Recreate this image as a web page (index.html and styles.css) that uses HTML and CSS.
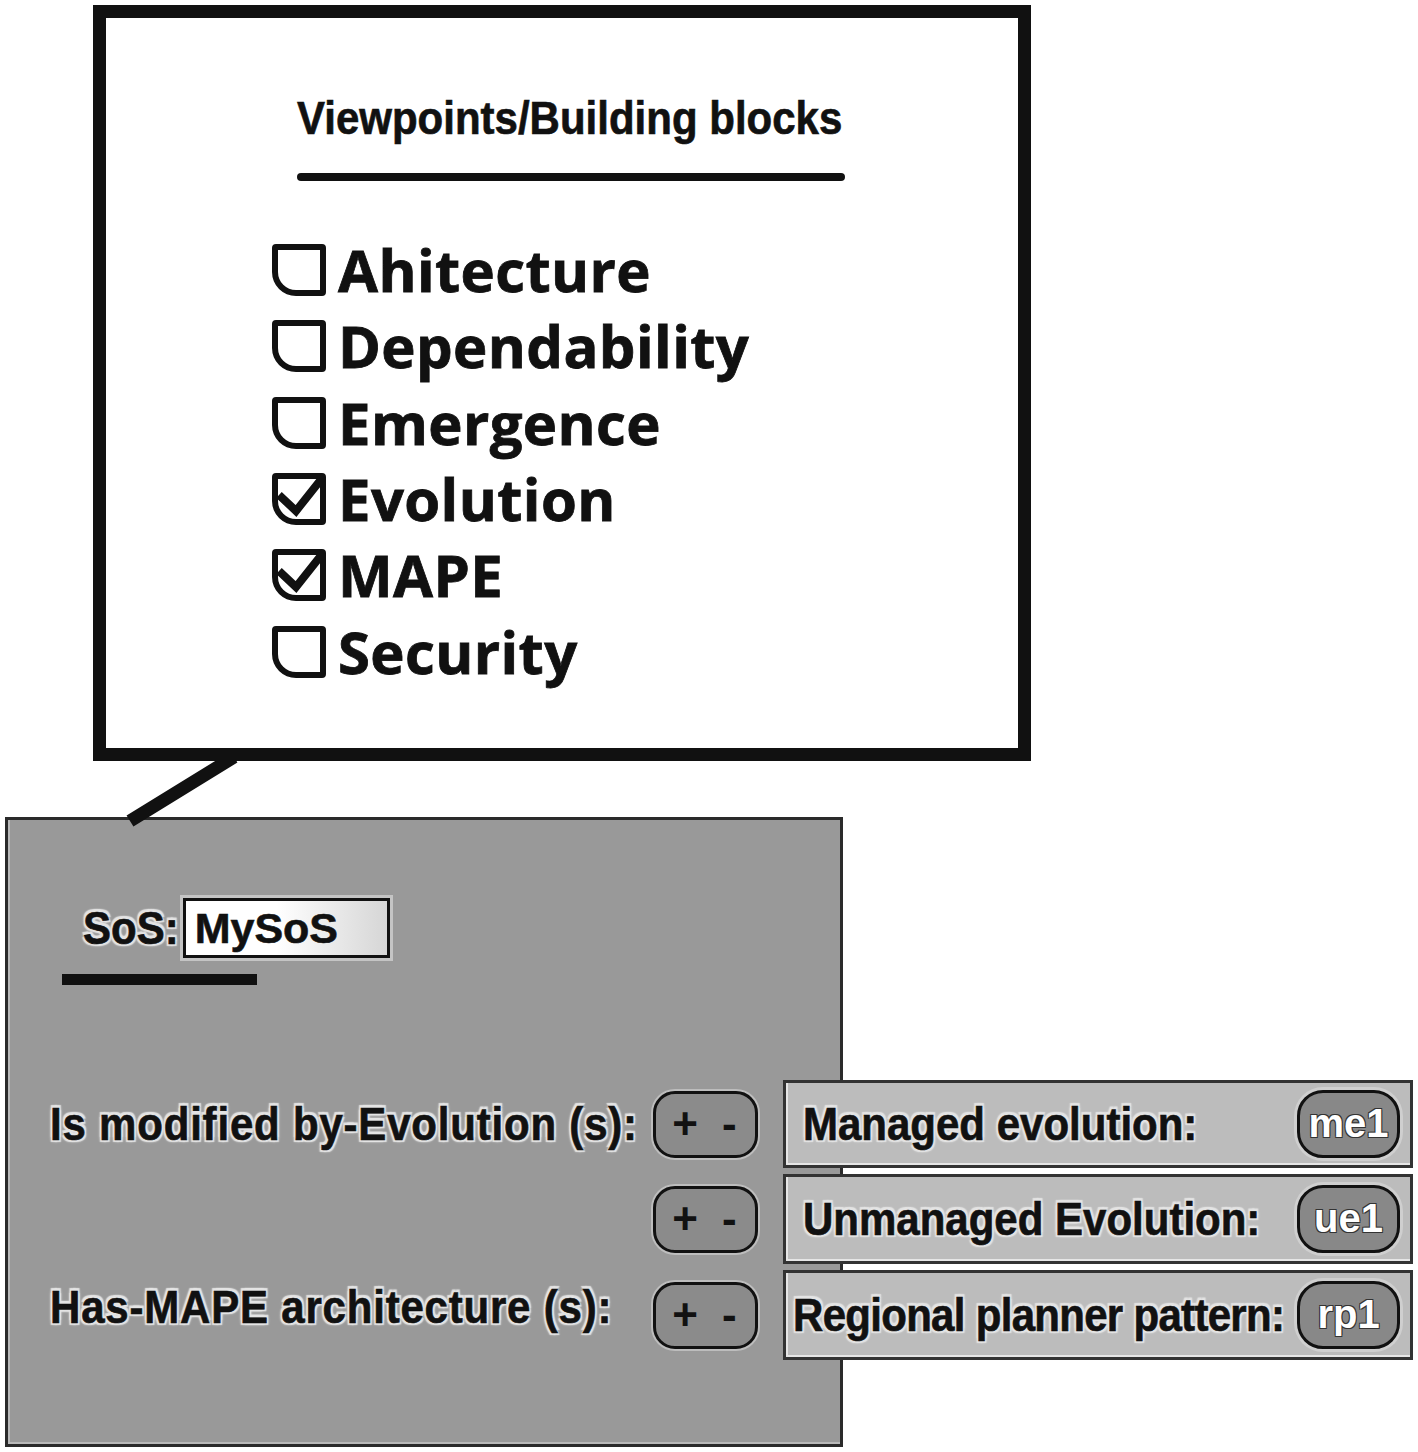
FILE: index.html
```html
<!DOCTYPE html>
<html lang="en">
<head>
    <meta charset="UTF-8">
    <meta name="viewport" content="width=device-width, initial-scale=1.0">
    <title>Viewpoints / Building blocks</title>
    <link rel="stylesheet" href="styles.css">
</head>
<body>
<div class="canvas">
  <!-- callout pointer between the two windows -->
  <svg class="connector" width="1418" height="1452" viewBox="0 0 1418 1452">
    <line x1="234" y1="757" x2="130" y2="821" stroke="#111" stroke-width="13"/>
  </svg>

  <section class="callout">
    <h1 class="callout-title"><span>Viewpoints/Building blocks</span></h1>
    <div class="callout-rule"></div>
    <ul class="viewpoints">
      <li><span class="box"></span>Ahitecture</li>
      <li><span class="box"></span>Dependability</li>
      <li><span class="box"></span>Emergence</li>
      <li>
        <span class="box checked">
          <svg width="54" height="52" viewBox="0 0 54 52"><path d="M7 22 L24 38 L51 4" fill="none" stroke="#111" stroke-width="8"/></svg>
        </span>Evolution
      </li>
      <li>
        <span class="box checked">
          <svg width="54" height="52" viewBox="0 0 54 52"><path d="M7 22 L24 38 L51 4" fill="none" stroke="#111" stroke-width="8"/></svg>
        </span>MAPE
      </li>
      <li><span class="box"></span>Security</li>
    </ul>
  </section>

  <section class="panel">
    <div class="sos">
      <span class="halo">SoS:</span>
      <span class="sos-input">MySoS</span>
    </div>
    <div class="sos-bar"></div>

    <div class="relations">
      <span class="label halo">Is modified by-Evolution (s):</span>
      <span class="pm">+ -</span>
      <div class="item">
        <span class="halo">Managed evolution:</span>
        <span class="pill">me1</span>
      </div>

      <span></span>
      <span class="pm">+ -</span>
      <div class="item">
        <span class="halo">Unmanaged Evolution:</span>
        <span class="pill">ue1</span>
      </div>

      <span class="label label-up halo">Has-MAPE architecture (s):</span>
      <span class="pm">+ -</span>
      <div class="item item-wide">
        <span class="halo">Regional planner pattern:</span>
        <span class="pill">rp1</span>
      </div>
    </div>
  </section>
</div>
</body>
</html>
```

FILE: styles.css
```css
body {
  margin: 0;
  background: #fff;
  font-family: "Liberation Sans", Arial, sans-serif;
  color: #111;
}

.canvas {
  position: relative;
  width: 1418px;
  height: 1452px;
  overflow: hidden;
}

.connector {
  position: absolute;
  left: 0;
  top: 0;
  pointer-events: none;
}

/* top window */
.callout {
  position: relative;
  box-sizing: border-box;
  width: 938px;
  height: 756px;
  margin: 5px 0 0 93px;
  padding: 78px 0 0 166px;
  border: 13px solid #111;
  background: #fff;
}

.callout-title {
  margin: 0 0 0 25px;
  width: 548px;
  font-size: 42px;
  line-height: 48px;
  font-weight: bold;
  white-space: nowrap;
  -webkit-text-stroke: 0.6px #111;
}

.callout-title span {
  display: inline-block;
  transform: scaleY(1.12);
  transform-origin: 0 80%;
}

.callout-rule {
  width: 548px;
  height: 8px;
  margin: 29px 0 0 25px;
  border-radius: 4px;
  background: #111;
}

.viewpoints {
  list-style: none;
  margin: 51px 0 0;
  padding: 0;
}

.viewpoints li {
  display: flex;
  align-items: center;
  gap: 12px;
  height: 76.3px;
  font-family: "Open Sans", sans-serif;
  font-weight: bold;
  font-size: 58px;
  line-height: 76px;
  letter-spacing: 0.4px;
  -webkit-text-stroke: 0.8px #111;
}

.box {
  position: relative;
  flex: none;
  box-sizing: border-box;
  width: 54px;
  height: 52px;
  border: 6px solid #111;
  border-radius: 4px 4px 4px 24px;
}

.box svg {
  position: absolute;
  left: -6px;
  top: -6px;
  overflow: visible;
}

/* bottom window */
.panel {
  box-sizing: border-box;
  width: 838px;
  height: 630px;
  margin: 56px 0 0 5px;
  border: 3px solid #2a2a2a;
  background: #999;
  box-shadow: inset 2px -2px 0 #b9b9b9;
}

.halo {
  display: inline-block;
  font-weight: bold;
  font-size: 42px;
  white-space: nowrap;
  -webkit-text-stroke: 0.6px #111;
  text-shadow: -2px -2px 1px #e4e4e4, 2px -2px 1px #e4e4e4, -2px 2px 1px #e4e4e4, 2px 2px 1px #e4e4e4, 0 0 4px #fff;
  transform: scaleY(1.12);
}

.label {
  letter-spacing: 0.8px;
}

.sos {
  display: flex;
  align-items: center;
  gap: 4px;
  margin: 78px 0 0 75px;
}

.sos-input {
  box-sizing: border-box;
  width: 207px;
  height: 60px;
  padding-left: 9px;
  border: 3px solid #111;
  background: linear-gradient(90deg, #fff 45%, #d6d6d6);
  box-shadow: 0 0 0 3px #c4c4c4;
  font-size: 43px;
  font-weight: bold;
  line-height: 54px;
  -webkit-text-stroke: 0.6px #111;
}

.sos-bar {
  width: 195px;
  height: 11px;
  margin: 16px 0 0 54px;
  background: #111;
}

.relations {
  display: grid;
  grid-template-columns: 578px 105px 630px;
  grid-template-rows: 88px 90px 90px;
  column-gap: 25px;
  row-gap: 6px;
  align-items: center;
  margin-top: 95px;
  padding-left: 42px;
}

.label-up {
  margin-bottom: 16px;
}

.pm {
  box-sizing: border-box;
  height: 67px;
  border: 3px solid #111;
  border-radius: 22px;
  background: #8b8b8b;
  box-shadow: 0 0 0 2px #bdbdbd;
  font-size: 44px;
  font-weight: bold;
  line-height: 60px;
  letter-spacing: 6px;
  text-align: center;
  padding-left: 4px;
}

.item {
  box-sizing: border-box;
  align-self: stretch;
  display: flex;
  align-items: center;
  justify-content: space-between;
  padding: 0 10px 0 17px;
  border: 3px solid #333;
  background: #bcbcbc;
  box-shadow: inset 2px -2px 0 #e6e6e6;
}

.item-wide {
  padding-left: 7px;
}

.item-wide .halo {
  letter-spacing: -0.7px;
}

.pill {
  box-sizing: border-box;
  width: 103px;
  height: 68px;
  border: 3px solid #111;
  border-radius: 26px;
  background: #888;
  box-shadow: 0 0 0 3px #cfcfcf;
  color: #fff;
  font-size: 40px;
  font-weight: bold;
  line-height: 60px;
  text-align: center;
  text-shadow: -1px -1px 0 #333, 1px -1px 0 #333, -1px 1px 0 #333, 1px 1px 0 #333;
}
```
